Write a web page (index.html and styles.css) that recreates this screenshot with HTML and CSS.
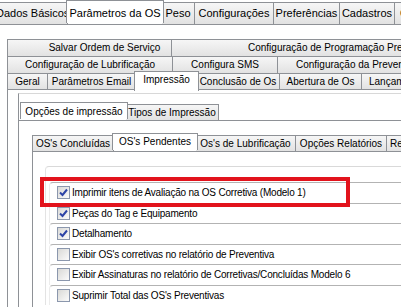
FILE: index.html
```html
<!DOCTYPE html>
<html lang="pt">
<head>
  <meta charset="UTF-8">
  <title>Parâmetros da OS</title>
  <link rel="stylesheet" href="styles.css">
</head>
<body>
  <div class="janela">
    <div class="abas abas-topo">
      <div class="aba">Dados Básicos</div>
      <div class="aba ativa">Parâmetros da OS</div>
      <div class="aba">Peso</div>
      <div class="aba">Configurações</div>
      <div class="aba">Preferências</div>
      <div class="aba">Cadastros</div>
      <div class="aba">Consultas</div>
    </div>

    <div class="pagina pagina-os">
      <div class="abas abas-l1">
        <div class="aba salvar">Salvar Ordem de Serviço</div>
        <div class="aba programacao">Configuração de Programação Preventiva</div>
      </div>
      <div class="abas abas-l2">
        <div class="aba">Configuração de Lubrificação</div>
        <div class="aba">Configura SMS</div>
        <div class="aba preventiva">Configuração da Preventiva</div>
      </div>
      <div class="abas abas-l3">
        <div class="aba">Geral</div>
        <div class="aba">Parâmetros Email</div>
        <div class="aba ativa">Impressão</div>
        <div class="aba">Conclusão de Os</div>
        <div class="aba">Abertura de Os</div>
        <div class="aba lancamentos">Lançamentos</div>
      </div>

      <div class="pagina pagina-impressao">
        <div class="quadro">
          <div class="abas abas-opcoes">
            <div class="aba ativa">Opções de impressão</div>
            <div class="aba">Tipos de Impressão</div>
          </div>

          <div class="pagina pagina-opcoes">
            <div class="abas abas-os">
              <div class="aba">OS's Concluídas</div>
              <div class="aba ativa">OS's Pendentes</div>
              <div class="aba">Os's de Lubrificação</div>
              <div class="aba">Opções Relatórios</div>
              <div class="aba relatorios">Relatórios</div>
            </div>

            <div class="pagina pagina-pendentes">
              <div class="grupo">
                <label class="item"><span class="caixa marcada"><svg viewBox="0 0 11 11"><path d="M2 5.5 L4.5 8 L9 2.5"/></svg></span>Imprimir itens de Avaliação na OS Corretiva (Modelo 1)</label>
                <label class="item"><span class="caixa marcada"><svg viewBox="0 0 11 11"><path d="M2 5.5 L4.5 8 L9 2.5"/></svg></span>Peças do Tag e Equipamento</label>
                <label class="item"><span class="caixa marcada"><svg viewBox="0 0 11 11"><path d="M2 5.5 L4.5 8 L9 2.5"/></svg></span>Detalhamento</label>
                <label class="item"><span class="caixa"></span>Exibir OS's corretivas no relatório de Preventiva</label>
                <label class="item"><span class="caixa"></span>Exibir Assinaturas no relatório de Corretivas/Concluídas Modelo 6</label>
                <label class="item"><span class="caixa"></span>Suprimir Total das OS's Preventivas</label>
              </div>
              <div class="destaque"></div>
            </div>
          </div>
        </div>
      </div>
    </div>
  </div>
</body>
</html>
```

FILE: styles.css
```css
* {
  box-sizing: border-box;
}

body {
  margin: 0;
  width: 401px;
  height: 307px;
  overflow: hidden;
  background: #ffffff;
  font-family: "Liberation Sans", Arial, sans-serif;
  font-size: 10px;
  color: #000000;
}

.janela {
  width: 401px;
}

/* abas */
.abas {
  display: grid;
  position: relative;
  z-index: 1;
}

.aba {
  height: 17px;
  border: 1px solid #8e9196;
  border-left: none;
  background: linear-gradient(#f6f6f6, #e2e2e2);
  text-align: center;
  line-height: 15px;
  white-space: nowrap;
  overflow: hidden;
}

.aba:first-child {
  border-left: 1px solid #8e9196;
}

.aba.ativa {
  position: relative;
  background: #ffffff;
  border-left: 1px solid #8e9196;
  border-bottom: none;
  margin: -2px -2px -1px -2px;
  height: auto;
  line-height: 16px;
  z-index: 2;
}

.abas-topo {
  margin-left: -5px;
  padding-top: 2px;
  grid-template-columns: 73px 94px 33px 79px 66px 55px 60px;
}

.abas-topo .aba {
  height: 23px;
  line-height: 20px;
  font-size: 11px;
}

.abas-topo .aba.ativa {
  line-height: 24px;
}

.pagina {
  border-top: 1px solid #8e9196;
  border-left: 1px solid #8e9196;
  background: #ffffff;
  margin-top: -1px;
}

.pagina-os {
  border-left: none;
  padding: 14px 0 0 7px;
}

.abas-l1 {
  grid-template-columns: 165px 330px;
}

.abas-l2 {
  margin-top: -1px;
  grid-template-columns: 166px 105px 200px;
}

.abas-l3 {
  margin-top: -1px;
  grid-template-columns: 41px 88px 61px 83px 82px 80px;
}

.abas-l1 .aba,
.abas-l2 .aba {
  height: 18px;
  line-height: 16px;
}

.abas-l1 .salvar {
  padding-left: 30px;
}

.abas-l1 .programacao {
  text-align: left;
  padding-left: 76px;
}

.abas-l2 .preventiva {
  text-align: left;
  padding-left: 18px;
}

.abas-l3 .lancamentos {
  text-align: left;
  padding-left: 7px;
}

.pagina-impressao {
  padding: 3px 0 0 10px;
  height: 220px;
}

.quadro {
  border-top: 1px solid #d8d8d8;
  border-left: 1px solid #8e9196;
  padding-top: 10px;
  height: 220px;
}

.abas-opcoes {
  padding-left: 3px;
  grid-template-columns: 104px 93px;
}

.abas-opcoes .aba {
  height: 17px;
  line-height: 15px;
}

.abas-opcoes .aba.ativa {
  line-height: 17px;
}

.pagina-opcoes {
  border-left: none;
  padding: 14px 0 0 13px;
}

.abas-os {
  grid-template-columns: 82px 82px 100px 91px 60px;
}

.abas-os .aba {
  height: 17px;
  line-height: 15px;
}

.abas-os .relatorios {
  text-align: left;
  padding-left: 3px;
}

.pagina-pendentes {
  position: relative;
  padding: 14px 0 0 12px;
  height: 160px;
}

.grupo {
  border-top: 1px solid #d9d9d9;
  border-left: 1px solid #e3e3e3;
  border-top-left-radius: 4px;
  padding: 15px 0 0 3px;
}

.item {
  display: flex;
  align-items: center;
  height: 20.5px;
  padding-left: 7px;
  border-top: 1px solid #b3b3b3;
  border-left: 1px solid #ececec;
  border-top-left-radius: 4px;
  white-space: nowrap;
  letter-spacing: -0.2px;
}

.caixa {
  width: 13px;
  height: 13px;
  margin-right: 2px;
  border: 1px solid #8b97ad;
  background: linear-gradient(135deg, #d9d9d6, #fbfbfb);
  flex: none;
}

.caixa svg {
  display: block;
  width: 11px;
  height: 11px;
  fill: none;
  stroke: #2d44a6;
  stroke-width: 2;
}

/* marcação em vermelho sobre a primeira opção */
.destaque {
  position: absolute;
  left: 7px;
  top: 25px;
  width: 310px;
  height: 30px;
  border: 4px solid #e2131c;
}
```
